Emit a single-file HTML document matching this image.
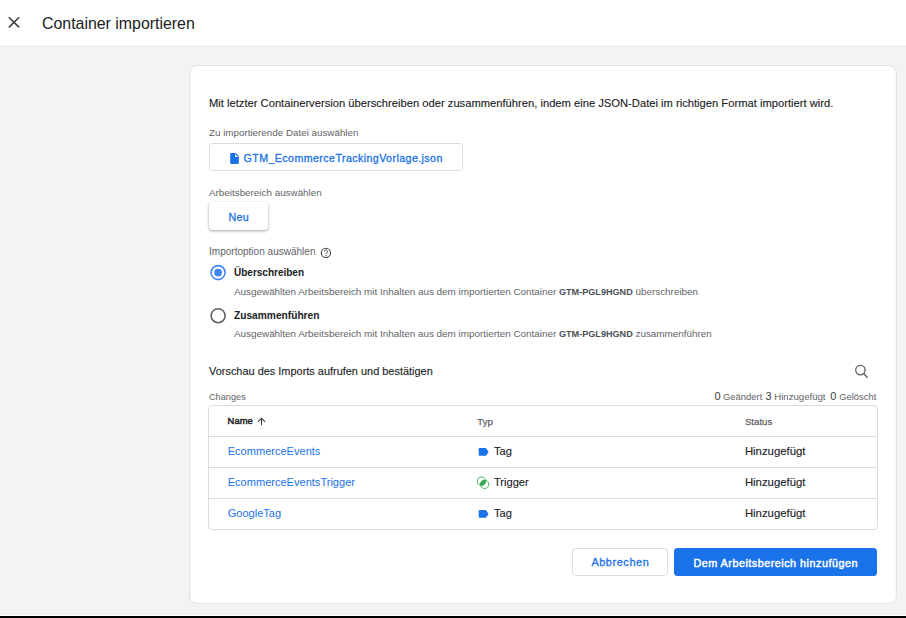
<!DOCTYPE html>
<html><head><meta charset="utf-8"><title>Container importieren</title><style>
html,body{margin:0;padding:0;}
body{width:906px;height:618px;position:relative;overflow:hidden;background:#f1f3f4;font-family:"Liberation Sans",sans-serif;}
.t{position:absolute;white-space:pre;line-height:1;}
.t b{font-weight:bold;}
#hdr{position:absolute;left:0;top:0;width:906px;height:46px;background:#fff;border-bottom:1px solid #e5e7ea;}
#bot1{position:absolute;left:0;top:615px;width:906px;height:1px;background:#fff;}
#bot2{position:absolute;left:0;top:616px;width:906px;height:2px;background:#000;}
#card{position:absolute;left:189px;top:65px;width:706px;height:537px;background:#fff;border:1px solid #e2e4e7;box-shadow:inset 1px 0 0 #f7f8f9,inset -1px 0 0 #f7f8f9;border-radius:8px;}
.box{position:absolute;border:1px solid #dadce0;border-radius:3.5px;background:#fff;}
#neu{position:absolute;left:209px;top:202px;width:59px;height:28px;border-radius:4px;background:#fff;box-shadow:0 1px 2px rgba(60,64,67,.3),0 1px 3px 1px rgba(60,64,67,.15);}
#tbl{position:absolute;left:208px;top:405px;width:668px;height:123px;border:1px solid #dadce0;border-radius:4px;}
.hl{position:absolute;left:209px;width:668px;height:1px;background:#dadce0;}
#ok{position:absolute;left:674px;top:548px;width:203px;height:28px;border-radius:3.5px;background:#1a73e8;}
</style></head><body>
<div id="hdr"></div><svg style="position:absolute;left:0;top:0" width="40" height="46"><path d="M8.8 17.3 L19.2 27.4 M19.2 17.3 L8.8 27.4" stroke="#3c4043" stroke-width="1.6" fill="none"/></svg><div class="t" style="left:42.00px;top:16.24px;font-size:15.9px;color:#202124;">Container importieren</div>
<div id="bot1"></div><div id="bot2"></div><div id="card"></div><div class="t" style="left:209.00px;top:97.62px;font-size:11.2px;color:#202124;-webkit-text-stroke:0.12px #202124;">Mit letzter Containerversion überschreiben oder zusammenführen, indem eine JSON-Datei im richtigen Format importiert wird.</div>
<div class="t" style="left:209.00px;top:128.29px;font-size:9.82px;color:#5f6368;">Zu importierende Datei auswählen</div>
<div class="box" style="left:209px;top:143px;width:252px;height:26px;"></div><svg style="position:absolute;left:228.4px;top:151.9px" width="13" height="13" viewBox="0 0 24 24" preserveAspectRatio="xMinYMin meet"><path d="M6 2c-1.1 0-1.99.9-1.99 2L4 20c0 1.1.89 2 1.99 2H18c1.1 0 2-.9 2-2V8l-6-6H6zm7 7V3.5L18.5 9H13z" fill="#1a73e8"/></svg><div class="t" style="left:243.50px;top:153.24px;font-size:10.7px;color:#1a73e8;-webkit-text-stroke:0.3px #1a73e8;letter-spacing:0.4px;">GTM_EcommerceTrackingVorlage.json</div>
<div class="t" style="left:209.00px;top:187.95px;font-size:9.86px;color:#5f6368;">Arbeitsbereich auswählen</div>
<div id="neu"></div><div class="t" style="left:228.40px;top:211.74px;font-size:10.7px;color:#1a73e8;-webkit-text-stroke:0.3px #1a73e8;letter-spacing:0.4px;">Neu</div>
<div class="t" style="left:209.00px;top:247.10px;font-size:10.04px;color:#5f6368;">Importoption auswählen</div>
<svg style="position:absolute;left:319px;top:246px" width="14" height="14" viewBox="0 0 14 14"><circle cx="6.9" cy="6.9" r="4.6" stroke="#3c4043" stroke-width="1.05" fill="none"/><path d="M5.4 5.6 a1.55 1.55 0 1 1 2.4 1.25 c-0.55 0.4 -0.8 0.7 -0.8 1.4" stroke="#3c4043" stroke-width="1" fill="none"/><circle cx="7" cy="9.3" r="0.6" fill="#3c4043"/></svg><svg style="position:absolute;left:208px;top:262px" width="20" height="20" viewBox="0 0 20 20"><circle cx="10.1" cy="10.6" r="7.0" stroke="#4285f4" stroke-width="1.6" fill="none"/><circle cx="10.1" cy="10.6" r="3.9" fill="#4285f4"/></svg><div class="t" style="left:234.00px;top:267.54px;font-size:10.0px;color:#202124;font-weight:bold;">Überschreiben</div>
<div class="t" style="left:234.00px;top:286.54px;font-size:9.88px;color:#5f6368;">Ausgewählten Arbeitsbereich mit Inhalten aus dem importierten Container <b style="font-size:9.1px;color:#4d5156">GTM-PGL9HGND</b> überschreiben</div>
<svg style="position:absolute;left:208px;top:305px" width="20" height="20" viewBox="0 0 20 20"><circle cx="10.1" cy="10.7" r="7.0" stroke="#5f6368" stroke-width="1.6" fill="none"/></svg><div class="t" style="left:234.00px;top:310.67px;font-size:10.2px;color:#202124;font-weight:bold;">Zusammenführen</div>
<div class="t" style="left:234.00px;top:329.34px;font-size:9.88px;color:#5f6368;">Ausgewählten Arbeitsbereich mit Inhalten aus dem importierten Container <b style="font-size:9.1px;color:#4d5156">GTM-PGL9HGND</b> zusammenführen</div>
<div class="t" style="left:209.00px;top:365.63px;font-size:10.95px;color:#202124;-webkit-text-stroke:0.12px #202124;">Vorschau des Imports aufrufen und bestätigen</div>
<svg style="position:absolute;left:851px;top:361px" width="20" height="20" viewBox="0 0 20 20"><circle cx="9.4" cy="9.1" r="4.7" stroke="#5f6368" stroke-width="1.35" fill="none"/><path d="M12.7 12.5 L16.6 16.7" stroke="#5f6368" stroke-width="1.5"/></svg><div class="t" style="left:209.00px;top:392.72px;font-size:9.19px;color:#5f6368;">Changes</div>
<div class="t" style="left:714.50px;top:391.29px;font-size:11px;color:#3c4043;">0</div>
<div class="t" style="left:723.00px;top:391.80px;font-size:9.45px;color:#5f6368;">Geändert</div>
<div class="t" style="left:765.40px;top:391.29px;font-size:11px;color:#3c4043;">3</div>
<div class="t" style="left:774.30px;top:391.67px;font-size:9.6px;color:#5f6368;">Hinzugefügt</div>
<div class="t" style="left:830.20px;top:391.29px;font-size:11px;color:#3c4043;">0</div>
<div class="t" style="left:839.20px;top:391.80px;font-size:9.45px;color:#5f6368;">Gelöscht</div>
<div id="tbl"></div><div class="hl" style="top:436px"></div><div class="hl" style="top:467px"></div><div class="hl" style="top:498px"></div><div class="t" style="left:227.60px;top:416.69px;font-size:9.35px;color:#202124;-webkit-text-stroke:0.45px #202124;letter-spacing:0.1px;">Name</div>
<svg style="position:absolute;left:255px;top:416px" width="12" height="11" viewBox="0 0 12 11"><path d="M6.5 9.3 V2.6 M2.9 5.9 L6.5 2.3 L10.1 5.9" stroke="#3c4043" stroke-width="1.05" fill="none"/></svg><div class="t" style="left:477.30px;top:417.02px;font-size:9.66px;color:#5f6368;-webkit-text-stroke:0.25px #5f6368;">Typ</div>
<div class="t" style="left:744.90px;top:417.02px;font-size:9.66px;color:#5f6368;-webkit-text-stroke:0.25px #5f6368;">Status</div>
<div class="t" style="left:227.70px;top:445.85px;font-size:11.05px;color:#1a73e8;">EcommerceEvents</div>
<div class="t" style="left:494.00px;top:445.82px;font-size:11.08px;color:#202124;-webkit-text-stroke:0.12px #202124;">Tag</div>
<div class="t" style="left:744.90px;top:446.09px;font-size:11.35px;color:#202124;-webkit-text-stroke:0.12px #202124;">Hinzugefügt</div>
<svg style="position:absolute;left:477px;top:446.2px" width="14" height="11" viewBox="0 0 14 11"><path d="M2.5 2.0 h6.4 l2.7 3.9 l-2.7 3.9 h-6.4 a0.8 0.8 0 0 1 -0.8 -0.8 v-6.2 a0.8 0.8 0 0 1 0.8 -0.8z" fill="#1a73e8"/></svg><div class="t" style="left:227.70px;top:476.95px;font-size:11.05px;color:#1a73e8;">EcommerceEventsTrigger</div>
<div class="t" style="left:494.00px;top:476.92px;font-size:11.08px;color:#202124;-webkit-text-stroke:0.12px #202124;">Trigger</div>
<div class="t" style="left:744.90px;top:477.19px;font-size:11.35px;color:#202124;-webkit-text-stroke:0.12px #202124;">Hinzugefügt</div>
<svg style="position:absolute;left:475px;top:475.0px" width="16" height="16" viewBox="0 0 16 16"><defs><clipPath id="c1"><circle cx="6.5" cy="6.2" r="4.2"/></clipPath></defs><circle cx="6.5" cy="6.2" r="4.2" stroke="#34a853" stroke-width="0.9" fill="none"/><circle cx="9.6" cy="9.3" r="4.2" stroke="#34a853" stroke-width="0.9" fill="none"/><circle cx="9.6" cy="9.3" r="4.2" fill="#34a853" clip-path="url(#c1)"/></svg><div class="t" style="left:227.70px;top:508.05px;font-size:11.05px;color:#1a73e8;">GoogleTag</div>
<div class="t" style="left:494.00px;top:508.02px;font-size:11.08px;color:#202124;-webkit-text-stroke:0.12px #202124;">Tag</div>
<div class="t" style="left:744.90px;top:508.29px;font-size:11.35px;color:#202124;-webkit-text-stroke:0.12px #202124;">Hinzugefügt</div>
<svg style="position:absolute;left:477px;top:508.4px" width="14" height="11" viewBox="0 0 14 11"><path d="M2.5 2.0 h6.4 l2.7 3.9 l-2.7 3.9 h-6.4 a0.8 0.8 0 0 1 -0.8 -0.8 v-6.2 a0.8 0.8 0 0 1 0.8 -0.8z" fill="#1a73e8"/></svg><div class="box" style="left:572px;top:548px;width:94px;height:26px;"></div><div class="t" style="left:591.40px;top:557.47px;font-size:10.9px;color:#1a73e8;-webkit-text-stroke:0.3px #1a73e8;letter-spacing:0.58px;">Abbrechen</div>
<div id="ok"></div><div class="t" style="left:693.40px;top:557.56px;font-size:10.8px;color:#ffffff;-webkit-text-stroke:0.45px #fff;letter-spacing:0.5px;">Dem Arbeitsbereich hinzufügen</div>

</body></html>
